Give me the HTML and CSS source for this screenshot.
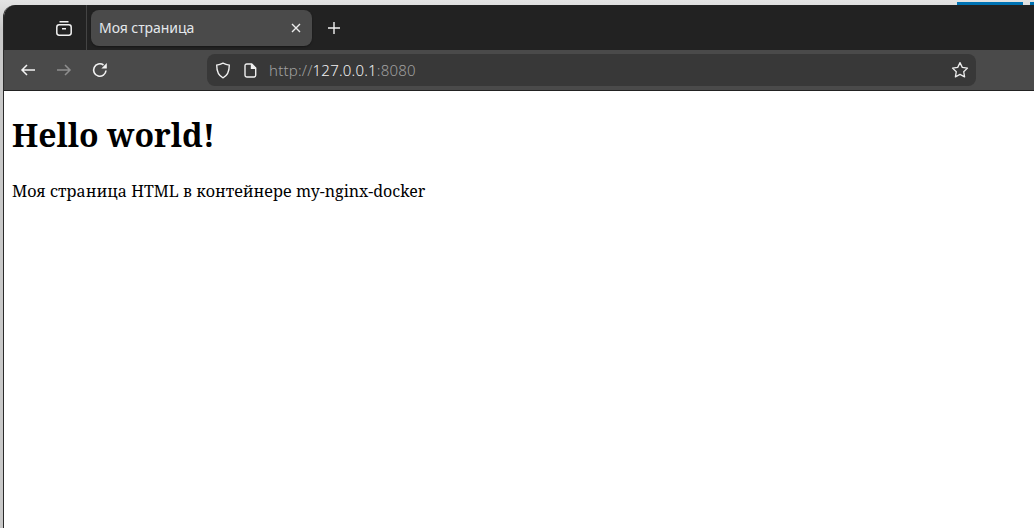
FILE: index.html
```html
<!DOCTYPE html>
<html lang="ru">
<head>
<meta charset="utf-8">
<title>Моя страница</title>
<link rel="stylesheet" href="styles.css">
</head>
<body>
<div class="desk-accent">
  <span class="accent-a"></span>
  <span class="accent-b"></span>
</div>
<div class="window">
  <header class="tabbar">
    <div class="tabbar-left">
      <svg class="icon" width="18" height="18" viewBox="0 0 18 18" fill="none" stroke="#f2f2f2" stroke-width="1.5">
        <path d="M4.5 2.750h9"/>
        <rect x="1.8" y="5.750" width="14.4" height="10.500" rx="2.4"/>
        <path d="M7 9.750h4"/>
      </svg>
    </div>
    <div class="tab">
      <span class="tab-title">Моя страница</span>
      <svg class="icon" width="10" height="10" viewBox="0 0 10 10" fill="none" stroke="#ececec" stroke-width="1.4">
        <path d="M1 1l8 8M9 1l-8 8"/>
      </svg>
    </div>
    <svg class="icon new-tab" width="14" height="14" viewBox="0 0 14 14" fill="none" stroke="#f2f2f2" stroke-width="1.4">
      <path d="M7 1v12M1 7h12"/>
    </svg>
  </header>
  <nav class="toolbar">
    <div class="nav-buttons">
      <svg class="icon" width="16" height="16" viewBox="0 0 16 16" fill="none" stroke="#f2f2f2" stroke-width="1.5">
        <path d="M15 8H2M7 3L2 8l5 5"/>
      </svg>
      <svg class="icon" width="16" height="16" viewBox="0 0 16 16" fill="none" stroke="#8e8e8e" stroke-width="1.5">
        <path d="M1 8h13M9 3l5 5-5 5"/>
      </svg>
      <svg class="icon" width="16" height="16" viewBox="0 0 16 16" fill="none" stroke="#f2f2f2" stroke-width="1.6">
        <path d="M14 8.500A6.200 6.200 0 1 1 11.500 3"/>
        <path d="M14.800 1v5.400H9.400z" fill="#f2f2f2" stroke="none"/>
      </svg>
    </div>
    <div class="urlbar">
      <svg class="icon" width="16" height="17" viewBox="0 0 16 17" fill="none" stroke="#f0f0f0" stroke-width="1.400">
        <path d="M8 1.200c2 1.100 4 1.700 6.300 1.900 0 6-1.800 10.700-6.300 12.700C3.500 13.800 1.700 9.100 1.700 3.100 4 2.900 6 2.300 8 1.200z"/>
      </svg>
      <svg class="icon page-icon" width="13" height="15" viewBox="0 0 13 15" fill="none" stroke="#f0f0f0" stroke-width="1.400">
        <path d="M2.700 1h5l4 4v7.300a1.700 1.700 0 0 1-1.700 1.700H2.700A1.700 1.700 0 0 1 1 12.300V2.700A1.700 1.700 0 0 1 2.700 1z"/>
        <path d="M7.500 1v4.200h4.200" fill="#f0f0f0"/>
      </svg>
      <span class="url"><span class="url-dim">http://</span>127.0.0.1<span class="url-dim">:8080</span></span>
      <svg class="icon star" width="18" height="18" viewBox="0 0 18 18" fill="none" stroke="#ececec" stroke-width="1.300" stroke-linejoin="round">
        <path d="M9 1.600l2.300 4.800 5.200.7-3.800 3.600.9 5.200L9 13.400l-4.600 2.500.9-5.200L1.500 7.100l5.200-.7z"/>
      </svg>
    </div>
  </nav>
  <main class="page">
    <h1 class="heading">Hello world!</h1>
    <p class="text">Моя страница HTML в контейнере my-nginx-docker</p>
  </main>
</div>
</body>
</html>
```
FILE: styles.css
```css
* { box-sizing: border-box; }
html, body { height: 100%; }
body {
  margin: 0;
  padding: 5px 0 0 3px;
  background: linear-gradient(#e4e4e4, #c8c8c8 30px);
  overflow: hidden;
}
.desk-accent { position: absolute; top: 2px; left: 0; right: 0; height: 3px; }
.accent-a { position: absolute; left: 957px; width: 66px; height: 3px; background: #0073b4; }
.accent-b { position: absolute; left: 1030px; width: 4px; height: 3px; background: #0073b4; }
.window {
  height: 100%;
  display: flex;
  flex-direction: column;
  border-left: 1px solid #2a2a2a;
  border-top-left-radius: 12px;
  overflow: hidden;
  background: #fff;
  font-family: "Noto Sans", sans-serif;
}
.icon { display: block; flex: none; }
.tabbar {
  height: 45px;
  background: #222222;
  display: flex;
  align-items: center;
  flex: none;
}
.tabbar-left {
  width: 83px;
  height: 45px;
  padding: 1px 13px 0 51px;
  display: flex;
  align-items: center;
  justify-content: flex-end;
  border-right: 1px solid #444;
}
.tab {
  margin-left: 4px;
  margin-top: 1px;
  width: 221px;
  height: 36px;
  background: #4a4a4a;
  border-radius: 8px;
  display: flex;
  align-items: center;
  justify-content: space-between;
  padding: 0 11px 0 8px;
  box-shadow: 0 1px 2px rgba(0,0,0,.35);
}
.tab-title { color: #e4e8ec; font-size: 14px; line-height: 18px; margin-top: -1px; white-space: nowrap; letter-spacing: -.005em; }
.new-tab { margin-left: 15px; margin-top: 1px; }
.toolbar {
  height: 41px;
  background: #4a4a4a;
  display: flex;
  align-items: center;
  flex: none;
  border-bottom: 1px solid #222;
}
.nav-buttons {
  width: 203px;
  padding-left: 16px;
  display: flex;
  gap: 20px;
}
.urlbar {
  width: 769px;
  height: 32px;
  background: #383838;
  border-radius: 8px;
  display: flex;
  align-items: center;
  padding: 0 7px 0 8px;
}
.page-icon { margin-left: 13px; }
.url { margin-left: 12px; font-size: 15px; font-weight: 300; letter-spacing: .2px; color: #f2f2f2; white-space: nowrap; flex: 1; }
.url-dim { color: #a0a0a0; }
.page {
  flex: 1;
  padding: 8px;
  color: #000;
  font-family: "Noto Serif", "DejaVu Serif", serif;
}
.heading { margin: 14px 0 0; font-size: 32px; line-height: 44px; font-weight: 700; }
.text { margin: 23px 0 0; font-size: 16px; line-height: 22px; word-spacing: .2px; }
```
